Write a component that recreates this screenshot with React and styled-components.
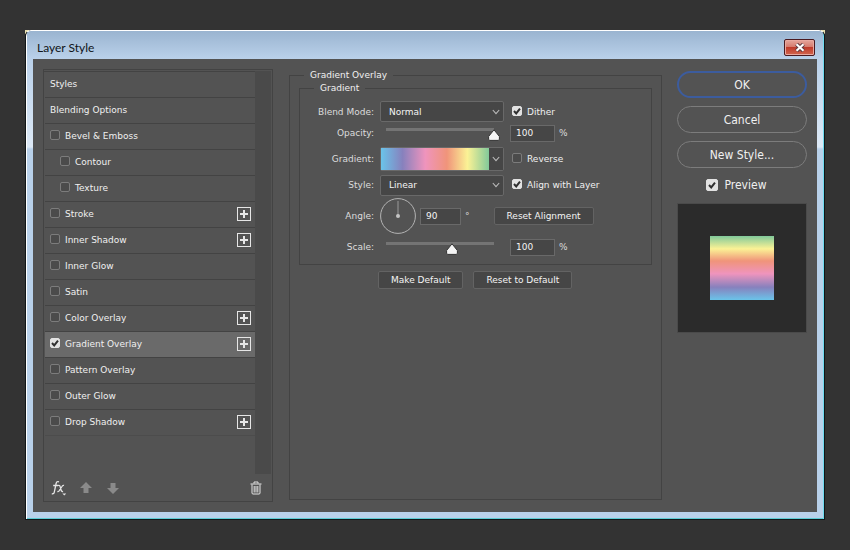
import { useState } from "react";
import styled, { createGlobalStyle, css } from "styled-components";

const GlobalStyle = createGlobalStyle`
  * {
    box-sizing: border-box;
  }

  body {
    margin: 0;
    background-color: #333333;
    color: #dcdcdc;
    font-family: "DejaVu Sans", sans-serif;
    font-size: 9px;
    line-height: 14px;
  }

  button, input, select {
    font: inherit;
    color: inherit;
  }
`;

const checkMark = `url("data:image/svg+xml,%3Csvg xmlns='http://www.w3.org/2000/svg' viewBox='0 0 10 10'%3E%3Cpath d='M2 5l2.2 2.4L8 2.6' fill='none' stroke='%23303030' stroke-width='2'/%3E%3C/svg%3E")`;
const thumbShape = `url("data:image/svg+xml,%3Csvg xmlns='http://www.w3.org/2000/svg' viewBox='0 0 12 12'%3E%3Cpath d='M6 .8L11.4 7.5V10.2Q11.4 11.4 10.2 11.4H1.8Q.6 11.4 .6 10.2V7.5Z' fill='%23f4f4f4' stroke='%23333'/%3E%3C/svg%3E")`;
const rainbow = "#6ac4ea, #8781bd 20%, #ef94bd 41%, #f0947a 61%, #fbf295 80%, #82c99a";

const Page = styled.main`
  display: flex;
  min-height: 100vh;
  padding: 30px 25px;
`;

const Dialog = styled.section`
  position: relative;
  flex: 1;
  display: flex;
  flex-direction: column;
  border: 1px solid #101618;
  border-top-color: #ffffff;
  border-radius: 6px 6px 0 0;
  padding: 0 7px 7px;
  background:
    linear-gradient(#ffffff, #ffffff) left / 1px 100% no-repeat,
    linear-gradient(#6fdcf0, #6fdcf0) right / 1px 100% no-repeat,
    linear-gradient(#5ccbd4, #5ccbd4) bottom / 100% 1px no-repeat,
    linear-gradient(#9ab4d0 0, #bad1ea 28px, #dde9f6 116px, #b9d1ea 118px);

  &::before,
  &::after {
    content: "";
    position: absolute;
    z-index: -1;
    top: -1px;
    left: -1px;
    width: 4px;
    height: 4px;
    background-color: #e8dfae;
  }

  &::after {
    left: auto;
    right: -1px;
  }
`;

const TitleBar = styled.header`
  display: flex;
  align-items: center;
  justify-content: space-between;
  height: 28px;
  padding: 6px 2px 0 4px;
`;

const Title = styled.h1`
  margin: 0;
  color: #101418;
  font-family: Lato, sans-serif;
  font-size: 12px;
  font-weight: 400;
`;

const CloseButton = styled.button`
  display: grid;
  place-items: center;
  width: 31px;
  height: 17px;
  margin-bottom: 2px;
  padding: 0;
  border: 1px solid #4a1a20;
  border-radius: 2px;
  background: linear-gradient(#e5a79d 0, #d5796c 48%, #bf3b2b 50%, #d2664e 100%);
  box-shadow: inset 0 0 0 1px #e9a9a0;
`;

const Body = styled.div`
  flex: 1;
  display: flex;
  padding: 10px;
  background-color: #535353;
`;

const StylesPanel = styled.aside`
  display: flex;
  flex-direction: column;
  width: 230px;
  border: 1px solid #434343;
  padding: 1px 1px 0 0;
`;

const ListArea = styled.div`
  flex: 1;
  display: flex;
`;

const List = styled.ul`
  flex: 1;
  margin: 0;
  padding: 0 0 0 1px;
  border-top: 1px solid #434343;
  list-style: none;
`;

const ScrollTrack = styled.div`
  width: 16px;
  background-color: #4a4a4a;
`;

const Item = styled.li`
  display: flex;
  align-items: center;
  justify-content: space-between;
  height: 26px;
  border-bottom: 1px solid #434343;
  padding: 0 4px 2px ${({ $indent }) => ($indent ? 15 : 5)}px;
  background-color: ${({ $active }) => ($active ? "#6a6a6a" : "transparent")};
  color: #f0f0f0;

  &:last-child {
    border-bottom-color: #4c4c4c;
  }
`;

const CheckLabel = styled.label`
  display: flex;
  align-items: center;
  gap: 5px;
  color: #f0f0f0;
`;

const OptionLabel = styled(CheckLabel)`
  padding-left: 2px;
`;

const Check = styled.input.attrs({ type: "checkbox" })`
  appearance: none;
  width: 10px;
  height: 10px;
  margin: 0 0 2px;
  border: 1px solid #7c7c7c;
  border-radius: 2px;
  background-color: #4b4b4b;

  &:checked {
    border-color: #e2e2e2;
    background: #e2e2e2 ${checkMark} center / 10px 10px no-repeat;
  }
`;

const PlusButton = styled.button`
  display: grid;
  place-items: center;
  width: 14px;
  height: 14px;
  padding: 0;
  border: 1px solid #e6e6e6;
  background-color: transparent;
`;

const Tools = styled.div`
  display: flex;
  align-items: center;
  gap: 11px;
  height: 27px;
  padding: 0 7px;
`;

const ToolButton = styled.button`
  display: grid;
  place-items: center;
  width: 16px;
  height: 16px;
  padding: 0;
  border: 0;
  background-color: transparent;
  color: ${({ disabled }) => (disabled ? "#8a8a8a" : "#e6e6e6")};

  &:last-child {
    margin-left: auto;
  }
`;

const Group = styled.fieldset`
  min-width: 0;
  margin: 0;
  border: 1px solid #434343;
  padding: 0;
`;

const Legend = styled.legend`
  margin-left: 14px;
  padding: 0 6px;
  color: #f0f0f0;
  line-height: 13px;
`;

const Settings = styled(Group)`
  flex: 1;
  margin: 0 15px 2px 16px;
  padding: 0 9px;

  > legend {
    margin-left: 5px;
  }
`;

const Rows = styled.div`
  display: grid;
  grid-template-rows: 21px 22px 29px 24px 38px 24px;
  padding: 6px 0 5px;
`;

const Row = styled.div`
  display: grid;
  grid-template-columns: 74px 124px 1fr;
  column-gap: 6px;
  align-items: center;
`;

const Caption = styled.label`
  text-align: right;
`;

const chevron = css`
  background: #464646
    url("data:image/svg+xml,%3Csvg xmlns='http://www.w3.org/2000/svg' viewBox='0 0 8 6'%3E%3Cpath d='M.8 1l3.2 3.6L7.2 1' fill='none' stroke='%23bbb' stroke-width='1.1'/%3E%3C/svg%3E")
    right 3px center / 8px 6px no-repeat;
`;

const Select = styled.select`
  appearance: none;
  width: 100%;
  height: 21px;
  border: 1px solid #696969;
  border-radius: 2px;
  padding: 0 16px 0 8px;
  color: #f4f4f4;
  ${chevron}
`;

const GradientPicker = styled.div`
  display: flex;
  height: 24px;
  border: 1px solid #696969;
  border-radius: 2px;
`;

const GradientSwatch = styled.button`
  flex: 1;
  border: 0;
  padding: 0;
  background: linear-gradient(to right, ${rainbow});
`;

const GradientMenu = styled.button`
  width: 14px;
  border: 0;
  padding: 0;
  ${chevron}
`;

const Slider = styled.input.attrs({ type: "range" })`
  appearance: none;
  width: 120px;
  height: 14px;
  margin: 0;
  background-color: transparent;

  &::-webkit-slider-runnable-track {
    height: 14px;
    background: linear-gradient(#747474, #747474) center 2px / calc(100% - 12px) 3px no-repeat;
  }

  &::-webkit-slider-thumb {
    appearance: none;
    width: 12px;
    height: 12px;
    margin-top: 3px;
    background: ${thumbShape} center / 12px 12px no-repeat;
  }
`;

const Inline = styled.div`
  display: flex;
  align-items: center;
  gap: 4px;
`;

const NumberBox = styled.input`
  width: ${({ $narrow }) => ($narrow ? 41 : 45)}px;
  height: 17px;
  border: 1px solid #696969;
  padding: 0 5px;
  background-color: #464646;
  color: #f4f4f4;
`;

const AngleRow = styled(Row)`
  grid-template-columns: 74px 1fr;
`;

const SmallButton = styled.button`
  height: 18px;
  border: 1px solid #636363;
  border-radius: 2px;
  padding: 0 12px;
  background-color: #464646;
  color: #f4f4f4;
  line-height: 14px;
  white-space: nowrap;
`;

const ResetAlignment = styled(SmallButton)`
  margin-left: 20px;
`;

const Defaults = styled.div`
  display: flex;
  gap: 10px;
  padding: 6px 0 6px 79px;
`;

const Actions = styled.div`
  display: flex;
  flex-direction: column;
  align-items: center;
  gap: 8px;
  width: 130px;
  padding-top: 2px;
  font-family: "DejaVu Sans Condensed", "DejaVu Sans", sans-serif;
  font-size: 12px;
`;

const PillButton = styled.button`
  width: 100%;
  height: 27px;
  border: ${({ $primary }) => ($primary ? "2px solid #3c5c9e" : "1px solid #7c7c7c")};
  border-radius: 14px;
  padding: 0;
  background-color: transparent;
  color: #f0f0f0;
`;

const PreviewLabel = styled(CheckLabel)`
  gap: 7px;
  height: 19px;
  padding: 0 12px 2px 0;
`;

const PreviewCheck = styled(Check)`
  width: 12px;
  height: 12px;
  margin: 0;
`;

const PreviewBox = styled.div`
  display: grid;
  place-items: center;
  width: 100%;
  height: 130px;
  border: 1px solid #4a4a4a;
  background-color: #2b2b2b;
`;

const PreviewSwatch = styled.div`
  width: 64px;
  height: 64px;
  background: linear-gradient(to top, ${rainbow});
`;

const effects = [
  { name: "Bevel & Emboss" },
  { name: "Contour", indent: true },
  { name: "Texture", indent: true },
  { name: "Stroke", multiple: true },
  { name: "Inner Shadow", multiple: true },
  { name: "Inner Glow" },
  { name: "Satin" },
  { name: "Color Overlay", multiple: true },
  { name: "Gradient Overlay", multiple: true },
  { name: "Pattern Overlay" },
  { name: "Outer Glow" },
  { name: "Drop Shadow", multiple: true },
];

const EffectsIcon = () => (
  <svg width="16" height="16" viewBox="0 0 16 16" fill="none" stroke="currentColor" strokeWidth="1.3">
    <path d="M8 1.8Q5.6.8 5 4L3.4 11.6Q3 14.4.8 13.6M2.2 5.5H7" />
    <path d="M7 5.5Q8.8 4.8 9.3 7L10.1 10Q10.6 12 12 11.3M13 5.4Q11.8 4.9 10.6 7L8.6 10.2Q7.6 12 6.4 11.4" />
    <path d="M11.4 13.6h3.8l-1.9 2z" fill="currentColor" stroke="none" />
  </svg>
);

const ArrowIcon = ({ down }) => (
  <svg width="12" height="12" viewBox="0 0 12 12" fill="currentColor">
    <path d={down ? "M6 12L0 6h3.5V1h5v5H12z" : "M6 0l6 6H8.5v5h-5V6H0z"} />
  </svg>
);

const TrashIcon = () => (
  <svg width="12" height="14" viewBox="0 0 12 14" fill="none" stroke="currentColor">
    <path d="M.5 3h11M4 2.5V1h4v1.5M2 3.5V12q0 1 1 1h6q1 0 1-1V3.5M4.2 5v6.5M6 5v6.5M7.8 5v6.5" />
  </svg>
);

const AngleDial = () => (
  <svg width="36" height="36" viewBox="0 0 36 36" fill="none" stroke="#b4b4b4">
    <circle cx="18" cy="18" r="17.4" />
    <path d="M18 3v15" stroke="#9a9a9a" />
    <circle cx="18" cy="18" r="2" fill="#c4c4c4" stroke="none" />
  </svg>
);

const App = () => {
  const [enabled, setEnabled] = useState(["Gradient Overlay"]);

  const toggle = (name) =>
    setEnabled((list) => (list.includes(name) ? list.filter((n) => n !== name) : [...list, name]));

  return (
    <Page>
      <GlobalStyle />
      <Dialog role="dialog" aria-labelledby="dialog-title">
        <TitleBar>
          <Title id="dialog-title">Layer Style</Title>
          <CloseButton aria-label="Close">
            <svg width="12" height="9" viewBox="0 0 12 9">
              <path d="M2.5 1.2l7 6.6M9.5 1.2l-7 6.6" stroke="#5c3a40" strokeWidth="4" />
              <path d="M2.5 1.2l7 6.6M9.5 1.2l-7 6.6" stroke="#ffffff" strokeWidth="2.2" />
            </svg>
          </CloseButton>
        </TitleBar>
        <Body>
          <StylesPanel>
            <ListArea>
              <List>
                <Item>Styles</Item>
                <Item>Blending Options</Item>
                {effects.map(({ name, indent, multiple }) => (
                  <Item key={name} $indent={indent} $active={name === "Gradient Overlay"}>
                    <CheckLabel>
                      <Check checked={enabled.includes(name)} onChange={() => toggle(name)} />
                      {name}
                    </CheckLabel>
                    {multiple && (
                      <PlusButton aria-label={`Add ${name}`}>
                        <svg width="8" height="8" viewBox="0 0 8 8">
                          <path d="M4 0v8M0 4h8" stroke="#e6e6e6" strokeWidth="2" />
                        </svg>
                      </PlusButton>
                    )}
                  </Item>
                ))}
              </List>
              <ScrollTrack />
            </ListArea>
            <Tools>
              <ToolButton aria-label="Effects"><EffectsIcon /></ToolButton>
              <ToolButton aria-label="Move up" disabled><ArrowIcon /></ToolButton>
              <ToolButton aria-label="Move down" disabled><ArrowIcon down /></ToolButton>
              <ToolButton aria-label="Delete"><TrashIcon /></ToolButton>
            </Tools>
          </StylesPanel>

          <Settings>
            <Legend>Gradient Overlay</Legend>
            <Group>
              <Legend>Gradient</Legend>
              <Rows>
                <Row>
                  <Caption htmlFor="blend">Blend Mode:</Caption>
                  <Select id="blend"><option>Normal</option></Select>
                  <OptionLabel><Check defaultChecked />Dither</OptionLabel>
                </Row>
                <Row>
                  <Caption htmlFor="opacity">Opacity:</Caption>
                  <Slider aria-label="Opacity slider" defaultValue={100} />
                  <Inline><NumberBox id="opacity" defaultValue="100" />%</Inline>
                </Row>
                <Row>
                  <Caption as="span">Gradient:</Caption>
                  <GradientPicker>
                    <GradientSwatch aria-label="Edit gradient" />
                    <GradientMenu aria-label="Choose gradient" />
                  </GradientPicker>
                  <OptionLabel><Check />Reverse</OptionLabel>
                </Row>
                <Row>
                  <Caption htmlFor="style">Style:</Caption>
                  <Select id="style"><option>Linear</option></Select>
                  <OptionLabel><Check defaultChecked />Align with Layer</OptionLabel>
                </Row>
                <AngleRow>
                  <Caption htmlFor="angle">Angle:</Caption>
                  <Inline>
                    <AngleDial />
                    <NumberBox id="angle" $narrow defaultValue="90" />
                    °
                    <ResetAlignment>Reset Alignment</ResetAlignment>
                  </Inline>
                </AngleRow>
                <Row>
                  <Caption htmlFor="scale">Scale:</Caption>
                  <Slider aria-label="Scale slider" max={164} defaultValue={100} />
                  <Inline><NumberBox id="scale" defaultValue="100" />%</Inline>
                </Row>
              </Rows>
            </Group>
            <Defaults>
              <SmallButton>Make Default</SmallButton>
              <SmallButton>Reset to Default</SmallButton>
            </Defaults>
          </Settings>

          <Actions>
            <PillButton $primary>OK</PillButton>
            <PillButton>Cancel</PillButton>
            <PillButton>New Style...</PillButton>
            <PreviewLabel><PreviewCheck defaultChecked />Preview</PreviewLabel>
            <PreviewBox><PreviewSwatch /></PreviewBox>
          </Actions>
        </Body>
      </Dialog>
    </Page>
  );
};

export default App;
